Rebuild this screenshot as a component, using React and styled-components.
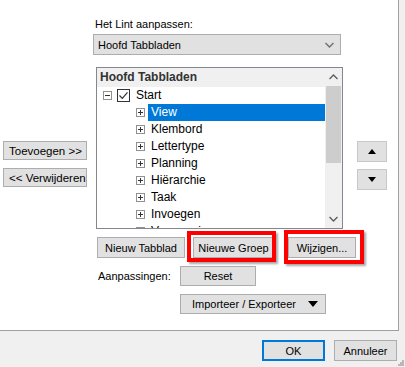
import React from 'react';
import styled, { createGlobalStyle } from 'styled-components';

const GlobalStyle = createGlobalStyle`
  body {
    margin: 0;
    background: #f0f0f0;
    font-family: "Liberation Sans", "Noto Sans", sans-serif;
    font-size: 11px;
    color: #000;
  }
`;

const tabs = ['Klembord', 'Lettertype', 'Planning', 'Hiërarchie', 'Taak', 'Invoegen', 'Vormgeving'];

function Expander({ open }) {
  return (
    <svg width="9" height="9" viewBox="0 0 9 9">
      <rect x="0.5" y="0.5" width="8" height="8" fill="#fff" stroke="#919191" />
      <path d="M2 4.5h5" stroke="#333" />
      {!open && <path d="M4.5 2v5" stroke="#333" />}
    </svg>
  );
}

function Check() {
  return (
    <svg width="13" height="13" viewBox="0 0 13 13">
      <rect x="0.5" y="0.5" width="12" height="12" fill="#fff" stroke="#333" />
      <path d="M2.5 6.5l2.8 2.8 5.2-6" fill="none" stroke="#333" strokeWidth="1.2" />
    </svg>
  );
}

function Chevron({ down, color = '#606060' }) {
  return (
    <svg width="9" height="6" viewBox="0 0 9 6">
      <path d={down ? 'M0.5 1l4 4 4-4' : 'M0.5 5l4-4 4 4'} fill="none" stroke={color} strokeWidth="1.4" />
    </svg>
  );
}

function Triangle({ down, size = 7 }) {
  const h = Math.ceil(size / 2) + 1;
  return (
    <svg width={size} height={h} viewBox={`0 0 ${size} ${h}`}>
      <path d={down ? `M0 0h${size}l-${size / 2} ${h}z` : `M0 ${h}h${size}l-${size / 2} -${h}z`} fill="#000" />
    </svg>
  );
}

export default function App() {
  return (
    <Window>
      <GlobalStyle />
      <Panel>
        <LeftCol>
          <SideButton>Toevoegen &gt;&gt;</SideButton>
          <SideButton>&lt;&lt; Verwijderen</SideButton>
        </LeftCol>

        <MidCol>
          <Label>Het Lint aanpassen:</Label>
          <Dropdown>
            <span>Hoofd Tabbladen</span>
            <Chevron down color="#707070" />
          </Dropdown>

          <Tree>
            <TreeBody>
              <TreeHeader>Hoofd Tabbladen</TreeHeader>
              <Row indent={6}>
                <Expander open />
                <Check />
                <RowText>Start</RowText>
              </Row>
              <Row indent={39}>
                <Expander />
                <RowText selected>View</RowText>
              </Row>
              {tabs.map((t) => (
                <Row indent={39} key={t}>
                  <Expander />
                  <RowText>{t}</RowText>
                </Row>
              ))}
            </TreeBody>
            <Scrollbar>
              <ScrollArrow>
                <Chevron />
              </ScrollArrow>
              <Thumb />
              <ScrollArrow bottom>
                <Chevron down />
              </ScrollArrow>
            </Scrollbar>
          </Tree>

          <ButtonRow>
            <Button width={88}>Nieuw Tabblad</Button>
            <Button width={81} marked="-7px -3px -5px -7px">Nieuwe Groep</Button>
            <Button width={68} marked="-8px -9px -7px -5px">Wijzigen...</Button>
          </ButtonRow>

          <OptionRow indent={5}>
            <OptionLabel>Aanpassingen:</OptionLabel>
            <Button width={76} height={20}>Reset</Button>
          </OptionRow>

          <OptionRow indent={87}>
            <MenuButton>
              <span>Importeer / Exporteer</span>
              <Triangle down size={10} />
            </MenuButton>
          </OptionRow>
        </MidCol>

        <RightCol>
          <MoveButton>
            <Triangle size={8} />
          </MoveButton>
          <MoveButton>
            <Triangle down size={8} />
          </MoveButton>
        </RightCol>
      </Panel>

      <Footer>
        <DialogButton primary>OK</DialogButton>
        <DialogButton>Annuleer</DialogButton>
        <Grip width="7" height="7" viewBox="0 0 7 7">
          <rect x="5" y="1" width="2" height="2" fill="#b8b8b8" />
          <rect x="3" y="3" width="2" height="2" fill="#b8b8b8" />
          <rect x="5" y="3" width="2" height="2" fill="#b8b8b8" />
          <rect x="1" y="5" width="2" height="2" fill="#b8b8b8" />
          <rect x="3" y="5" width="2" height="2" fill="#b8b8b8" />
          <rect x="5" y="5" width="2" height="2" fill="#b8b8b8" />
        </Grip>
      </Footer>
    </Window>
  );
}

const Window = styled.div`
  width: 405px;
  height: 367px;
  display: flex;
  flex-direction: column;
  position: relative;
  overflow: hidden;
`;

const Panel = styled.div`
  width: 398px;
  height: 330px;
  background: #fff;
  border-right: 1px solid #a0a0a0;
  border-bottom: 1px solid #a0a0a0;
  display: flex;
`;

const LeftCol = styled.div`
  width: 90px;
  flex-shrink: 0;
  padding: 141px 0 0 3px;
  display: flex;
  flex-direction: column;
  gap: 8px;
`;

const Button = styled.button`
  position: relative;
  flex-shrink: 0;
  box-sizing: border-box;
  width: ${(p) => p.width}px;
  height: ${(p) => p.height || 21}px;
  padding: 0;
  margin: 0;
  background: #e1e1e1;
  border: 1px solid #adadad;
  font: inherit;
  color: #000;
  text-align: center;
  white-space: nowrap;
  &::after {
    content: '';
    display: ${(p) => (p.marked ? 'block' : 'none')};
    position: absolute;
    inset: ${(p) => p.marked || '0'};
    border: 4px solid #ff0000;
    box-shadow: 2px 2px 2px rgba(0, 0, 0, 0.35);
    pointer-events: none;
  }
`;

const SideButton = styled(Button).attrs({ width: 84, height: 19 })`
  text-align: left;
  padding-left: 5px;
  font-size: 11.5px;
`;

const MidCol = styled.div`
  width: 250px;
  flex-shrink: 0;
  padding-top: 16px;
  display: flex;
  flex-direction: column;
`;

const Label = styled.div`
  height: 16px;
  line-height: 16px;
  padding-left: 2px;
  margin-bottom: 2px;
`;

const Dropdown = styled.div`
  box-sizing: border-box;
  width: 248px;
  height: 21px;
  background: #e1e1e1;
  border: 1px solid #adadad;
  display: flex;
  align-items: center;
  justify-content: space-between;
  padding: 0 6px 0 4px;
`;

const Tree = styled.div`
  box-sizing: border-box;
  margin: 12px 0 0 3px;
  width: 247px;
  height: 162px;
  border: 1px solid #828790;
  display: flex;
  overflow: hidden;
`;

const TreeBody = styled.div`
  flex: 1;
  overflow: hidden;
  font-size: 12px;
`;

const TreeHeader = styled.div`
  height: 19px;
  line-height: 19px;
  background: #f0f0f0;
  font-weight: bold;
  color: #333;
  padding-left: 3px;
`;

const Row = styled.div`
  height: 17px;
  display: flex;
  align-items: center;
  gap: 5px;
  padding-left: ${(p) => p.indent}px;
`;

const RowText = styled.span`
  flex: ${(p) => (p.selected ? 1 : 'none')};
  height: 17px;
  line-height: 17px;
  padding-left: 3px;
  margin-left: -2px;
  background: ${(p) => (p.selected ? '#0078d7' : 'transparent')};
  color: ${(p) => (p.selected ? '#fff' : '#000')};
`;

const Scrollbar = styled.div`
  width: 17px;
  background: #f0f0f0;
  display: flex;
  flex-direction: column;
`;

const ScrollArrow = styled.div`
  height: 18px;
  display: flex;
  align-items: center;
  justify-content: center;
  margin-top: ${(p) => (p.bottom ? 'auto' : '0')};
`;

const Thumb = styled.div`
  height: 77px;
  margin: 0 1px;
  background: #cdcdcd;
`;

const ButtonRow = styled.div`
  display: flex;
  margin: 8px 0 0 4px;
  gap: 8px;
  & > :last-child {
    margin-left: 6px;
  }
`;

const OptionRow = styled.div`
  display: flex;
  align-items: center;
  margin-top: 8px;
  padding-left: ${(p) => p.indent}px;
`;

const OptionLabel = styled.span`
  width: 82px;
`;

const MenuButton = styled(Button).attrs({ width: 146, height: 20 })`
  display: flex;
  align-items: center;
  justify-content: space-between;
  padding: 0 7px 0 11px;
`;

const RightCol = styled.div`
  margin-left: 14px;
  padding-top: 141px;
  display: flex;
  flex-direction: column;
  gap: 7px;
`;

const MoveButton = styled(Button).attrs({ width: 30 })`
  display: flex;
  align-items: center;
  justify-content: center;
  border-color: #c8c8c8;
`;

const Footer = styled.div`
  flex: 1;
  display: flex;
  justify-content: flex-end;
  align-items: flex-start;
  gap: 9px;
  padding: 9px 8px 0 0;
`;

const DialogButton = styled.button`
  box-sizing: border-box;
  width: 63px;
  height: 21px;
  background: #e1e1e1;
  border: ${(p) => (p.primary ? '2px solid #0078d7' : '1px solid #adadad')};
  font: inherit;
  color: #000;
  padding: 0;
`;

const Grip = styled.svg`
  position: absolute;
  right: 1px;
  bottom: 1px;
`;
